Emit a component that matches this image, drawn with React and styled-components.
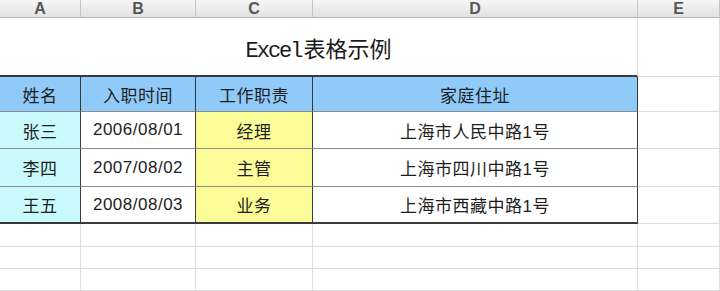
import React from 'react';
import styled, { createGlobalStyle } from 'styled-components';

const GlobalStyle = createGlobalStyle`
  html, body {
    margin: 0;
    padding: 0;
    background: #fff;
  }
`;

const COLS = ['A', 'B', 'C', 'D', 'E'];

const LINE = {
  light: '#dcdcdc',
  mid: '#8c8c8c',
  dark: '#3a3a3a',
};

const Sheet = styled.div`
  display: grid;
  grid-template-columns: 81px 115px 117px 325px 82px;
  grid-template-rows: 18px 59px 35px 37px 38px 37px 23px 22px 22px;
  width: 720px;
  height: 291px;
  overflow: hidden;
  background: #fff;
  font-family: "Liberation Sans", "Noto Sans CJK SC", sans-serif;
`;

const ColHead = styled.div`
  display: flex;
  align-items: center;
  justify-content: center;
  background: linear-gradient(#f6f6f6, #e2e2e2);
  border-right: 1px solid #c6c6c6;
  border-bottom: 1px solid #b4b4b4;
  color: #575757;
  font-weight: 700;
  font-size: 16px;
  box-sizing: border-box;
`;

const Cell = styled.div`
  display: flex;
  align-items: center;
  justify-content: center;
  box-sizing: border-box;
  grid-column: span ${(p) => p.$span || 1};
  background: ${(p) => p.$bg || '#fff'};
  border-right: 1px solid ${(p) => LINE[p.$right || 'light']};
  border-bottom: ${(p) => (p.$bottom === 'dark' ? 2 : 1)}px solid ${(p) => LINE[p.$bottom || 'light']};
  color: #1e1e1e;
  font-size: 17px;
  letter-spacing: 0.5px;
  white-space: nowrap;
`;

const Title = styled.span`
  font-size: 22px;
  color: #1a1a1a;
  letter-spacing: 0;
  padding-top: 2px;

  b {
    font-weight: 400;
    font-family: "Liberation Mono", monospace;
    letter-spacing: -2px;
    margin-right: 2px;
  }
`;

const header = ['姓名', '入职时间', '工作职责', '家庭住址'];

const rows = [
  ['张三', '2006/08/01', '经理', '上海市人民中路1号'],
  ['李四', '2007/08/02', '主管', '上海市四川中路1号'],
  ['王五', '2008/08/03', '业务', '上海市西藏中路1号'],
];

const colBg = ['#c9fbfc', '#fff', '#fbfc98', '#fff'];

const App = () => (
  <>
    <GlobalStyle />
    <Sheet>
      {COLS.map((c) => (
        <ColHead key={c}>{c}</ColHead>
      ))}

      <Cell $span={4} $bottom="dark">
        <Title>
          <b>Excel</b>表格示例
        </Title>
      </Cell>
      <Cell />

      {header.map((h) => (
        <Cell key={h} $bg="#8fcaf9" $right="dark" $bottom="mid">
          {h}
        </Cell>
      ))}
      <Cell />

      {rows.map((r, ri) => (
        <React.Fragment key={ri}>
          {r.map((v, ci) => (
            <Cell
              key={ci}
              $bg={colBg[ci]}
              $right="dark"
              $bottom={ri === rows.length - 1 ? 'dark' : 'mid'}
            >
              {v}
            </Cell>
          ))}
          <Cell />
        </React.Fragment>
      ))}

      {[0, 1, 2].map((ri) =>
        COLS.map((c) => <Cell key={`${ri}${c}`} />)
      )}
    </Sheet>
  </>
);

export default App;
